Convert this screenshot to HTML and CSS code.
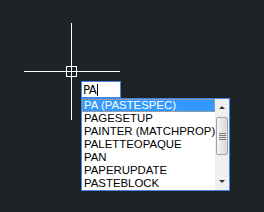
FILE: index.html
```html
<!DOCTYPE html>
<html lang="en">
<head>
    <meta charset="UTF-8">
    <title>Command Autocomplete</title>
    <link rel="stylesheet" href="styles.css">
</head>
<body>
    <div id="model-space">
        <!-- Crosshair cursor -->
        <div class="crosshair">
            <div class="cross-h"></div>
            <div class="cross-v"></div>
            <div class="pickbox"></div>
        </div>

        <!-- Dynamic input + suggestions -->
        <div class="command-popup">
            <div class="command-input"><span class="typed">PA</span><span class="caret"></span></div>
            <div class="suggest-list">
                <ul class="suggest-items">
                    <li class="selected">PA (PASTESPEC)</li>
                    <li>PAGESETUP</li>
                    <li>PAINTER (MATCHPROP)</li>
                    <li>PALETTEOPAQUE</li>
                    <li>PAN</li>
                    <li>PAPERUPDATE</li>
                    <li>PASTEBLOCK</li>
                </ul>
                <div class="scrollbar">
                    <div class="arrow up"></div>
                    <div class="track">
                        <div class="thumb"><span></span><span></span><span></span><span></span></div>
                    </div>
                    <div class="arrow down"></div>
                </div>
            </div>
        </div>
    </div>
</body>
</html>
```

FILE: styles.css
```css
body {
    margin: 0;
    padding: 0;
    background: #1f2227;
    font-family: "Liberation Sans", Arial, sans-serif;
    overflow: hidden;
}
#model-space {
    position: relative;
    width: 264px;
    height: 212px;
    background: #1f2227;
}
.crosshair .cross-h {
    position: absolute;
    left: 24px;
    top: 71px;
    width: 96px;
    height: 1px;
    background: #fff;
}
.crosshair .cross-v {
    position: absolute;
    left: 71px;
    top: 23px;
    width: 1px;
    height: 97px;
    background: #fff;
}
.crosshair .pickbox {
    position: absolute;
    left: 66px;
    top: 66px;
    width: 9px;
    height: 9px;
    border: 1px solid #fff;
}
.command-popup {
    position: absolute;
    left: 81px;
    top: 81px;
    display: flex;
    flex-direction: column;
    align-items: flex-start;
}
.command-input {
    width: 37px;
    height: 15px;
    border: 1px solid #3f87e6;
    background: #fff;
    display: flex;
    align-items: center;
    padding-left: 1px;
}
.command-input .typed {
    font-family: "DejaVu Sans Condensed", "DejaVu Sans", sans-serif;
    font-stretch: condensed;
    font-size: 13px;
    line-height: 15px;
    color: #000;
    letter-spacing: -0.5px;
}
.command-input .caret {
    display: inline-block;
    width: 1px;
    height: 12px;
    background: #000;
    margin-left: 1px;
}
.suggest-list {
    display: flex;
    border: 1px solid #3f87e6;
    background: #fff;
    width: 147px;
    height: 91px;
}
.suggest-items {
    list-style: none;
    margin: 0;
    padding: 0;
    flex: 1;
}
.suggest-items li {
    height: 13px;
    line-height: 13px;
    font-size: 11.4px;
    color: #000;
    padding-left: 2px;
    white-space: nowrap;
    overflow: hidden;
    box-sizing: border-box;
}
.suggest-items li.selected {
    background: #3399ff;
    color: #fff;
    border: 1px dotted #e89a5a;
    line-height: 11px;
    padding-left: 1px;
}
.scrollbar {
    width: 17px;
    display: flex;
    flex-direction: column;
    background: #f0f0f0;
}
.scrollbar .arrow {
    height: 17px;
    display: flex;
    align-items: center;
    justify-content: center;
}
.scrollbar .arrow::before {
    content: "";
    width: 0;
    height: 0;
    border-left: 3.5px solid transparent;
    border-right: 3.5px solid transparent;
}
.scrollbar .arrow.up::before {
    border-bottom: 3px solid #333;
}
.scrollbar .arrow.down::before {
    border-top: 3px solid #333;
}
.scrollbar .track {
    flex: 1;
    padding: 1px 1px 0 1px;
}
.scrollbar .thumb {
    height: 36px;
    border: 1px solid #a3a3a3;
    border-radius: 2px;
    background: linear-gradient(to right, #f4f4f4, #e4e4e4 60%, #d8d8d8);
    display: flex;
    flex-direction: column;
    align-items: center;
    justify-content: center;
    gap: 1px;
}
.scrollbar .thumb span {
    display: block;
    width: 7px;
    height: 1px;
    background: #7c7c7c;
}
```
